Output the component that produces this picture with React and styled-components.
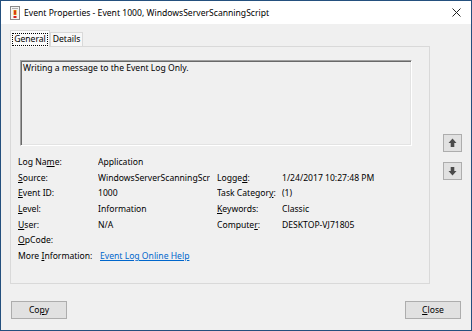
import React from "react";
import styled, { createGlobalStyle } from "styled-components";

const GlobalStyle = createGlobalStyle`
  html, body {
    margin: 0;
    padding: 0;
    background: #f0f0f0;
  }
  body {
    font-family: "Noto Sans", "Open Sans", sans-serif;
    font-size: 8.6px;
    color: #000;
  }
`;

const Window = styled.div`
  width: 472px;
  height: 331px;
  box-sizing: border-box;
  border: 1px solid #24507e;
  background: #f0f0f0;
  display: flex;
  flex-direction: column;
`;

const TitleBar = styled.div`
  height: 23px;
  background: #fff;
  display: flex;
  align-items: center;
  padding-left: 9px;
  flex-shrink: 0;

  .title {
    margin-left: 4px;
    flex: 1;
    white-space: nowrap;
  }

  .close {
    width: 30px;
    display: flex;
    justify-content: center;
  }
`;

const Body = styled.div`
  flex: 1;
  display: flex;
  flex-direction: column;
  padding: 6px 0 0 9px;
`;

const TabStrip = styled.div`
  display: flex;
  align-items: flex-end;
  height: 16px;
`;

const Tab = styled.div`
  box-sizing: border-box;
  height: ${(p) => (p.active ? "17px" : "14px")};
  width: ${(p) => p.w}px;
  border: 1px solid #d9d9d9;
  border-bottom: none;
  background: ${(p) => (p.active ? "#fbfbfb" : "#f7f7f7")};
  margin-bottom: ${(p) => (p.active ? "-1px" : "0")};
  position: relative;
  z-index: ${(p) => (p.active ? 2 : 1)};
  display: flex;
  align-items: center;
  justify-content: center;
  line-height: 11px;

  span {
    outline: ${(p) => (p.active ? "1px dotted #000" : "none")};
    padding: 0 1px;
  }
`;

const Middle = styled.div`
  display: flex;
`;

const TabPanel = styled.div`
  box-sizing: border-box;
  width: 420px;
  height: 238px;
  border: 1px solid #d9d9d9;
  background: #f0f0f0;
  padding: 13px 17px 0 9px;
`;

const MessageBox = styled.div`
  box-sizing: border-box;
  height: 86px;
  border-top: 1px solid #a0a0a0;
  border-left: 1px solid #a0a0a0;
  border-right: 1px solid #fff;
  border-bottom: 1px solid #fff;
  box-shadow: inset 1px 1px 0 #696969, inset -1px -1px 0 #e3e3e3;
  padding: 1px 2px;
  line-height: 13px;
`;

const Fields = styled.div`
  display: grid;
  grid-template-columns: 80px 119px 65px 1fr;
  grid-auto-rows: 15.7px;
  margin: 9px 0 0 -2px;
  line-height: 15.7px;
  white-space: nowrap;
`;

const Cell = styled.div`
  overflow: hidden;
  grid-column: ${(p) => p.col || "auto"};
  margin-right: ${(p) => (p.clip ? "7px" : "0")};
`;

const Link = styled.a`
  color: #0066cc;
  text-decoration: underline;
  margin-left: 2px;
`;

const SideColumn = styled.div`
  display: flex;
  flex-direction: column;
  gap: 10px;
  padding: 88px 0 0 13px;
`;

const ArrowButton = styled.button`
  box-sizing: border-box;
  width: 19px;
  height: 18px;
  padding: 0;
  border: 1px solid #adadad;
  background: #e1e1e1;
  display: flex;
  align-items: center;
  justify-content: center;
`;

const Footer = styled.div`
  display: flex;
  justify-content: space-between;
  padding: 17px 10px 0 1px;
`;

const Button = styled.button`
  box-sizing: border-box;
  width: 56px;
  height: 18px;
  padding: 0;
  border: 1px solid #adadad;
  background: #e1e1e1;
  font-family: inherit;
  font-size: 8.6px;
  line-height: 14px;
  color: #000;
`;

const EventIcon = () => (
  <svg width="10" height="14" viewBox="0 0 10 14">
    <rect x="0.5" y="0.5" width="9" height="13" fill="#f4f4f4" stroke="#8a8a8a" />
    <rect x="2" y="2" width="6" height="1" fill="#b0b0b0" />
    <rect x="3.5" y="4" width="3" height="5" fill="#e8a000" />
    <rect x="4.2" y="4.5" width="1.6" height="4" fill="#d42020" />
    <rect x="3.5" y="10" width="3" height="2" fill="#d42020" />
  </svg>
);

const CloseGlyph = () => (
  <svg width="9" height="9" viewBox="0 0 9 9">
    <path d="M0.5 0.5 L8.5 8.5 M8.5 0.5 L0.5 8.5" stroke="#222" strokeWidth="1" />
  </svg>
);

const Arrow = ({ down }) => (
  <svg
    width="9"
    height="10"
    viewBox="0 0 9 10"
    style={down ? { transform: "rotate(180deg)" } : undefined}
  >
    <path d="M4.5 0.5 L8.5 5 L6.3 5 L6.3 9 L2.7 9 L2.7 5 L0.5 5 Z" fill="#4a4a4a" />
  </svg>
);

const Key = ({ children }) => <u>{children}</u>;

export default function App() {
  return (
    <>
      <GlobalStyle />
      <Window>
        <TitleBar>
          <EventIcon />
          <span className="title">
            Event Properties - Event 1000, WindowsServerScanningScript
          </span>
          <span className="close">
            <CloseGlyph />
          </span>
        </TitleBar>
        <Body>
          <TabStrip>
            <Tab active w={40}>
              <span>General</span>
            </Tab>
            <Tab w={33}>
              <span>Details</span>
            </Tab>
          </TabStrip>
          <Middle>
            <TabPanel>
              <MessageBox>Writing a message to the Event Log Only.</MessageBox>
              <Fields>
                <Cell>Log Na<Key>m</Key>e:</Cell>
                <Cell col="2 / 5">Application</Cell>

                <Cell><Key>S</Key>ource:</Cell>
                <Cell clip>WindowsServerScanningScript</Cell>
                <Cell>Logge<Key>d</Key>:</Cell>
                <Cell>1/24/2017 10:27:48 PM</Cell>

                <Cell><Key>E</Key>vent ID:</Cell>
                <Cell>1000</Cell>
                <Cell>Task Categor<Key>y</Key>:</Cell>
                <Cell>(1)</Cell>

                <Cell><Key>L</Key>evel:</Cell>
                <Cell>Information</Cell>
                <Cell><Key>K</Key>eywords:</Cell>
                <Cell>Classic</Cell>

                <Cell><Key>U</Key>ser:</Cell>
                <Cell>N/A</Cell>
                <Cell>Compute<Key>r</Key>:</Cell>
                <Cell>DESKTOP-VJ71805</Cell>

                <Cell><Key>O</Key>pCode:</Cell>
                <Cell col="2 / 5"></Cell>

                <Cell>More <Key>I</Key>nformation:</Cell>
                <Cell col="2 / 5">
                  <Link>Event Log Online Help</Link>
                </Cell>
              </Fields>
            </TabPanel>
            <SideColumn>
              <ArrowButton>
                <Arrow />
              </ArrowButton>
              <ArrowButton>
                <Arrow down />
              </ArrowButton>
            </SideColumn>
          </Middle>
          <Footer>
            <Button>
              Co<Key>p</Key>y
            </Button>
            <Button>
              <Key>C</Key>lose
            </Button>
          </Footer>
        </Body>
      </Window>
    </>
  );
}
